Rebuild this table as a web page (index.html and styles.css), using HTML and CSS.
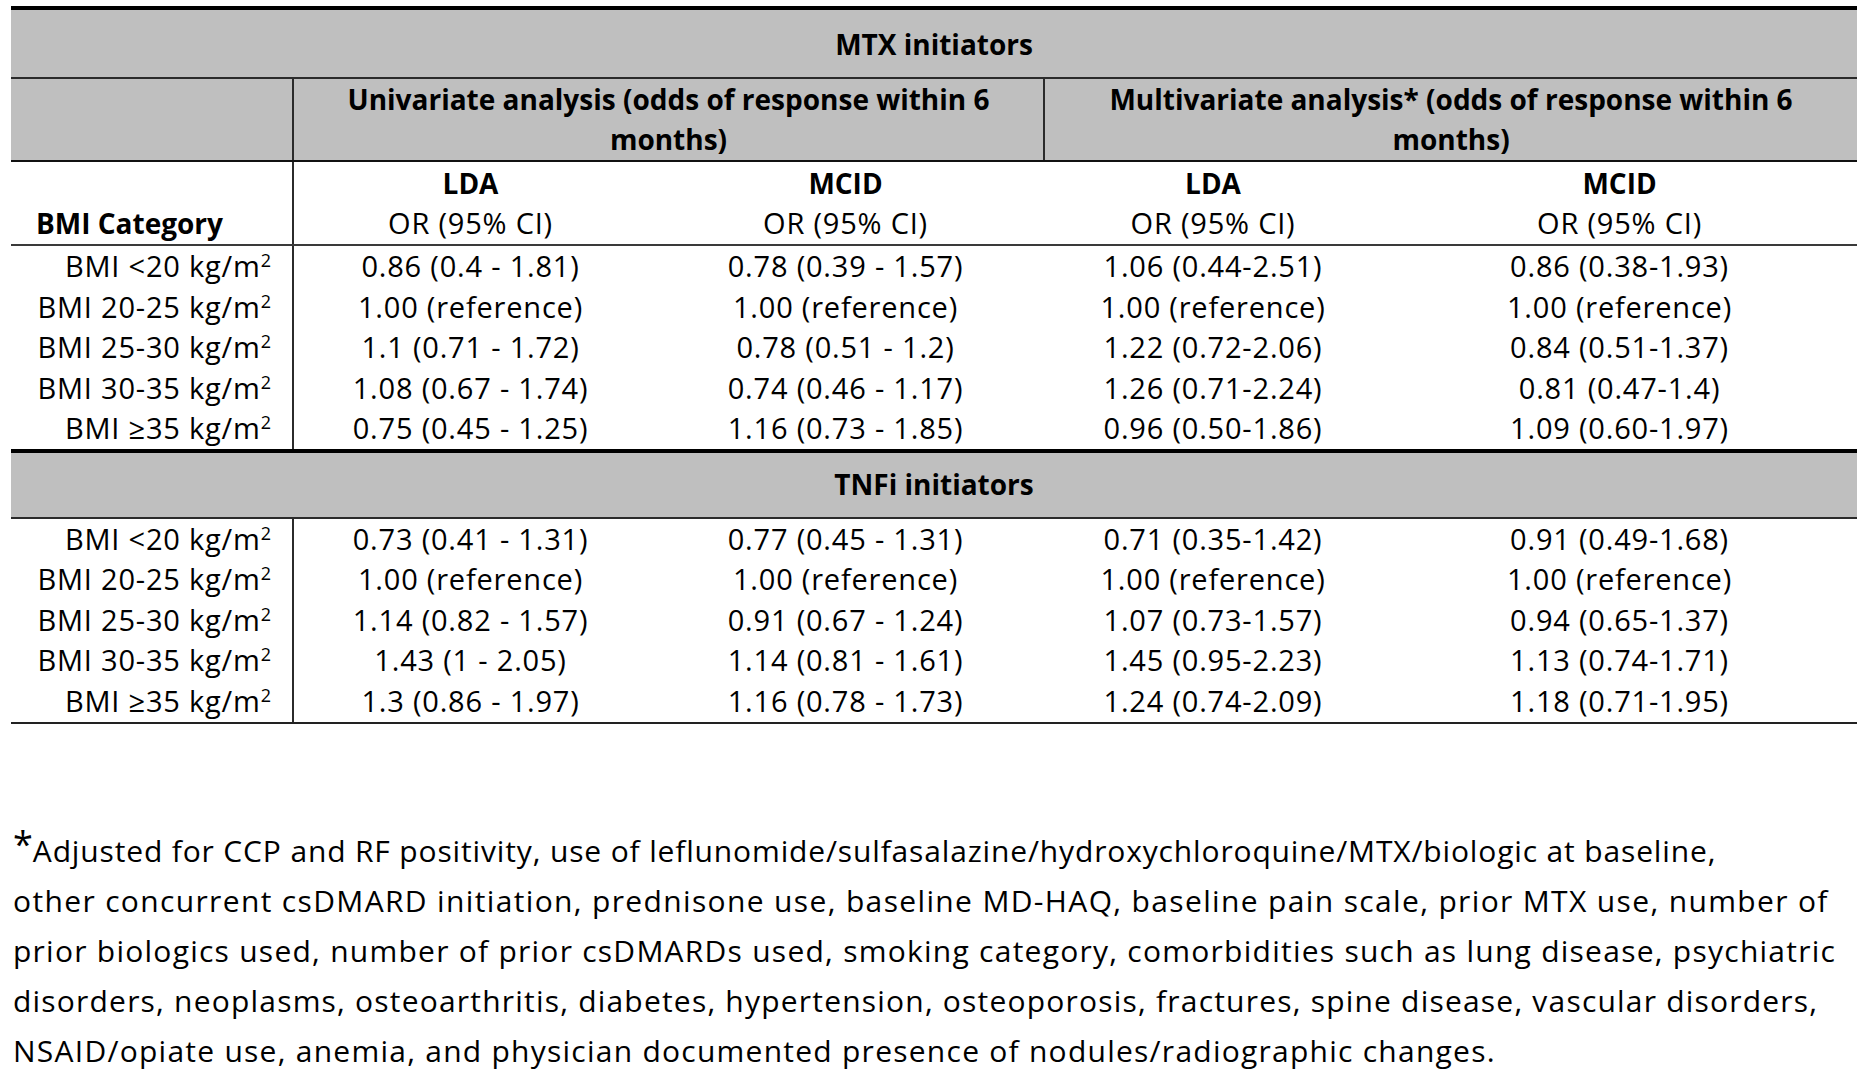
FILE: index.html
```html
<!DOCTYPE html>
<html lang="en">
<head>
<meta charset="utf-8">
<title>BMI and odds of response</title>
<link rel="stylesheet" href="styles.css">
</head>
<body>
<main class="page">
  <table class="or-table">
    <colgroup>
      <col class="c-cat">
      <col class="c-uni-lda">
      <col class="c-uni-mcid">
      <col class="c-mv-lda">
      <col class="c-mv-mcid">
    </colgroup>
    <thead>
      <tr class="band-row band-first">
        <th colspan="5" class="band">MTX initiators</th>
      </tr>
      <tr class="analysis-row">
        <th class="blank"></th>
        <th colspan="2" class="analysis divided">Univariate analysis (odds of response within 6<br>months)</th>
        <th colspan="2" class="analysis">Multivariate analysis* (odds of response within 6<br>months)</th>
      </tr>
      <tr class="sub-row">
        <th class="cat"><span class="cat-label">BMI Category</span></th>
        <th class="sub"><span class="metric">LDA</span><span class="or">OR (95% CI)</span></th>
        <th class="sub"><span class="metric">MCID</span><span class="or">OR (95% CI)</span></th>
        <th class="sub"><span class="metric">LDA</span><span class="or">OR (95% CI)</span></th>
        <th class="sub"><span class="metric">MCID</span><span class="or">OR (95% CI)</span></th>
      </tr>
    </thead>
    <tbody>
      <tr><th class="bmi">BMI &lt;20 kg/m<sup>2</sup></th><td>0.86 (0.4 - 1.81)</td><td>0.78 (0.39 - 1.57)</td><td>1.06 (0.44-2.51)</td><td>0.86 (0.38-1.93)</td></tr>
      <tr><th class="bmi">BMI 20-25 kg/m<sup>2</sup></th><td>1.00 (reference)</td><td>1.00 (reference)</td><td>1.00 (reference)</td><td>1.00 (reference)</td></tr>
      <tr><th class="bmi">BMI 25-30 kg/m<sup>2</sup></th><td>1.1 (0.71 - 1.72)</td><td>0.78 (0.51 - 1.2)</td><td>1.22 (0.72-2.06)</td><td>0.84 (0.51-1.37)</td></tr>
      <tr><th class="bmi">BMI 30-35 kg/m<sup>2</sup></th><td>1.08 (0.67 - 1.74)</td><td>0.74 (0.46 - 1.17)</td><td>1.26 (0.71-2.24)</td><td>0.81 (0.47-1.4)</td></tr>
      <tr><th class="bmi">BMI ≥35 kg/m<sup>2</sup></th><td>0.75 (0.45 - 1.25)</td><td>1.16 (0.73 - 1.85)</td><td>0.96 (0.50-1.86)</td><td>1.09 (0.60-1.97)</td></tr>
      <tr class="band-row band-second">
        <th colspan="5" class="band">TNFi initiators</th>
      </tr>
      <tr><th class="bmi">BMI &lt;20 kg/m<sup>2</sup></th><td>0.73 (0.41 - 1.31)</td><td>0.77 (0.45 - 1.31)</td><td>0.71 (0.35-1.42)</td><td>0.91 (0.49-1.68)</td></tr>
      <tr><th class="bmi">BMI 20-25 kg/m<sup>2</sup></th><td>1.00 (reference)</td><td>1.00 (reference)</td><td>1.00 (reference)</td><td>1.00 (reference)</td></tr>
      <tr><th class="bmi">BMI 25-30 kg/m<sup>2</sup></th><td>1.14 (0.82 - 1.57)</td><td>0.91 (0.67 - 1.24)</td><td>1.07 (0.73-1.57)</td><td>0.94 (0.65-1.37)</td></tr>
      <tr><th class="bmi">BMI 30-35 kg/m<sup>2</sup></th><td>1.43 (1 - 2.05)</td><td>1.14 (0.81 - 1.61)</td><td>1.45 (0.95-2.23)</td><td>1.13 (0.74-1.71)</td></tr>
      <tr class="last-row"><th class="bmi">BMI ≥35 kg/m<sup>2</sup></th><td>1.3 (0.86 - 1.97)</td><td>1.16 (0.78 - 1.73)</td><td>1.24 (0.74-2.09)</td><td>1.18 (0.71-1.95)</td></tr>
    </tbody>
  </table>

  <p class="footnote">
    <span class="fn-line fn-first"><span class="ast">*</span>Adjusted for CCP and RF positivity, use of leflunomide/sulfasalazine/hydroxychloroquine/MTX/biologic at baseline,</span>
    <span class="fn-line fn-wide">other concurrent csDMARD initiation, prednisone use, baseline MD-HAQ, baseline pain scale, prior MTX use, number of</span>
    <span class="fn-line">prior biologics used, number of prior csDMARDs used, smoking category, comorbidities such as lung disease, psychiatric</span>
    <span class="fn-line fn-tight">disorders, neoplasms, osteoarthritis, diabetes, hypertension, osteoporosis, fractures, spine disease, vascular disorders,</span>
    <span class="fn-line">NSAID/opiate use, anemia, and physician documented presence of nodules/radiographic changes.</span>
  </p>
</main>
</body>
</html>
```

FILE: styles.css
```css
html, body {
  margin: 0;
  padding: 0;
  background: #ffffff;
}

body {
  font-family: "Open Sans", "Liberation Sans", sans-serif;
  color: #000000;
}

.page {
  padding: 6px 0 0 11px;
}

.or-table {
  border-collapse: collapse;
  table-layout: fixed;
  width: 1846px;
  font-size: 29px;
  letter-spacing: 0.8px;
  line-height: 40.6px;
  border-top: 4px solid #000000;
}

.c-cat { width: 282px; }
.c-uni-lda { width: 354px; }
.c-uni-mcid { width: 397px; }
.c-mv-lda { width: 338px; }
.c-mv-mcid { width: 475px; }

.or-table th,
.or-table td {
  padding: 0;
  text-align: center;
  vertical-align: middle;
  white-space: nowrap;
}

.or-table th {
  font-weight: 400;
}

/* grey band rows */
.band {
  background: #bfbfbf;
  font-weight: 700 !important;
  font-size: 28px;
  letter-spacing: 0;
}

.band-first .band {
  padding: 14px 0 12px;
  border-bottom: 2px solid #2b2b2b;
}

.band-second .band {
  padding: 11px 0 12px;
  border-top: 4px solid #000000;
  border-bottom: 2px solid #2b2b2b;
}

/* analysis header row */
.analysis-row th {
  background: #bfbfbf;
  border-bottom: 2px solid #111111;
}

.analysis {
  font-weight: 700 !important;
  font-size: 28px;
  letter-spacing: 0;
}

.blank,
.divided {
  border-right: 2px solid #2b2b2b;
}

/* LDA / MCID row */
.sub-row th {
  border-bottom: 2px solid #3a3a3a;
  padding-top: 1px;
}

.cat {
  border-right: 2px solid #2b2b2b;
  text-align: left !important;
  vertical-align: bottom !important;
  padding-left: 25px !important;
}

.cat-label {
  font-weight: 700;
  font-size: 28px;
  letter-spacing: 0;
}

.sub .metric {
  display: block;
  font-weight: 700;
  font-size: 28px;
  letter-spacing: 0;
}

.sub .or {
  display: block;
}

/* data rows */
.bmi {
  text-align: right !important;
  padding-right: 21px !important;
  border-right: 2px solid #2b2b2b;
}

.bmi sup {
  font-size: 18px;
  line-height: 0;
  vertical-align: 10px;
  letter-spacing: 0;
}

.last-row th,
.last-row td {
  border-bottom: 2px solid #222222;
}

/* footnote */
.footnote {
  margin: 102px 0 0 2px;
  font-size: 30px;
  line-height: 50px;
  letter-spacing: 1.25px;
  white-space: nowrap;
}

.fn-line {
  display: block;
}

.fn-first {
  letter-spacing: 0.85px;
}

.fn-wide {
  letter-spacing: 1.35px;
}

.fn-tight {
  letter-spacing: 1.2px;
}

.ast {
  font-size: 36px;
  line-height: 0;
  vertical-align: 5px;
  letter-spacing: 0;
}
```
